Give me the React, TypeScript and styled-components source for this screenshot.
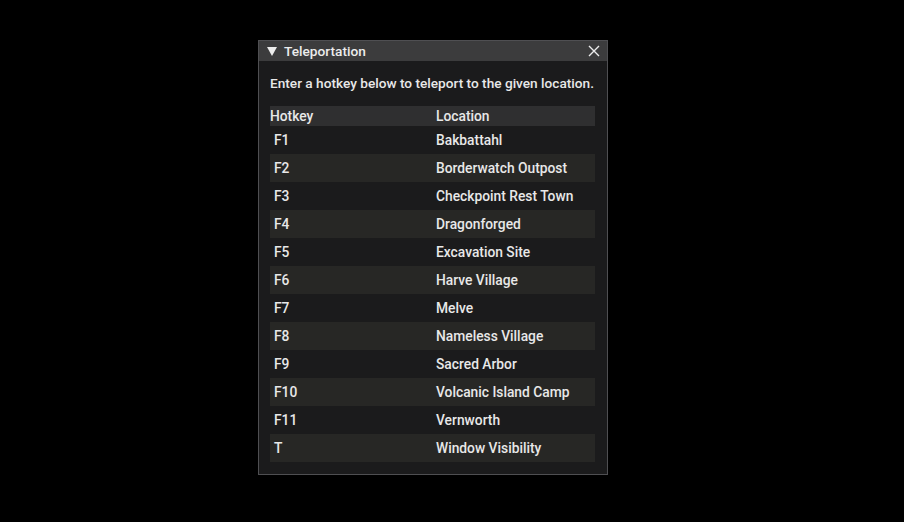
import React from "react";
import styled, { createGlobalStyle } from "styled-components";

const rows: [string, string][] = [
  ["F1", "Bakbattahl"],
  ["F2", "Borderwatch Outpost"],
  ["F3", "Checkpoint Rest Town"],
  ["F4", "Dragonforged"],
  ["F5", "Excavation Site"],
  ["F6", "Harve Village"],
  ["F7", "Melve"],
  ["F8", "Nameless Village"],
  ["F9", "Sacred Arbor"],
  ["F10", "Volcanic Island Camp"],
  ["F11", "Vernworth"],
  ["T", "Window Visibility"],
];

const GlobalStyle = createGlobalStyle`
  html, body {
    margin: 0;
    background: #000;
  }
  body {
    font-family: Roboto, "Liberation Sans", sans-serif;
    font-weight: 500;
    color: #e8e8e8;
  }
`;

const App = () => {
  return (
    <>
      <GlobalStyle />
      <Page>
        <WindowStyled>
          <TitleBar>
            <Arrow viewBox="0 0 10 9">
              <path d="M0 0 L10 0 L5 9 Z" fill="#ececec" />
            </Arrow>
            <Title>Teleportation</Title>
            <CloseButton viewBox="0 0 12 12">
              <path d="M1 1 L11 11 M11 1 L1 11" stroke="#ececec" strokeWidth="1.4" />
            </CloseButton>
          </TitleBar>
          <Body>
            <Intro>Enter a hotkey below to teleport to the given location.</Intro>
            <Table>
              <HeaderRow>
                <HeaderCell>Hotkey</HeaderCell>
                <HeaderCell>Location</HeaderCell>
              </HeaderRow>
              {rows.map(([key, loc], i) => (
                <Row key={key} $alt={i % 2 === 1}>
                  <Cell>{key}</Cell>
                  <Cell>{loc}</Cell>
                </Row>
              ))}
            </Table>
          </Body>
        </WindowStyled>
      </Page>
    </>
  );
};

export default App;

const Page = styled.div`
  width: 904px;
  height: 522px;
  padding: 40px 0 0 258px;
  box-sizing: border-box;
`;

const WindowStyled = styled.div`
  width: 350px;
  height: 435px;
  box-sizing: border-box;
  border: 1px solid #4f4f52;
  background: #1b1b1c;
  display: flex;
  flex-direction: column;
`;

const TitleBar = styled.div`
  height: 20px;
  background: #3c3c3d;
  display: flex;
  align-items: center;
  padding: 0 7px 0 8px;
`;

const Arrow = styled.svg`
  width: 10px;
  height: 9px;
  margin-right: 7px;
`;

const Title = styled.span`
  font-size: 13.7px;
  flex: 1;
  color: #ececec;
`;

const CloseButton = styled.svg`
  width: 12px;
  height: 12px;
`;

const Body = styled.div`
  padding: 12px 11px 0 11px;
`;

const Intro = styled.div`
  font-size: 13.65px;
  height: 20px;
  line-height: 20px;
  margin-bottom: 13px;
  white-space: nowrap;
`;

const Table = styled.div`
  display: flex;
  flex-direction: column;
  width: 325px;
`;

const HeaderRow = styled.div`
  display: grid;
  grid-template-columns: 166px 1fr;
  height: 20px;
  align-items: center;
  background: #2f2f30;
`;

const HeaderCell = styled.div`
  font-size: 13.8px;
`;

const Row = styled.div<{ $alt: boolean }>`
  display: grid;
  grid-template-columns: 166px 1fr;
  height: 28px;
  align-items: center;
  background: ${(p) => (p.$alt ? "#272725" : "transparent")};
  & > div:first-child {
    padding-left: 4px;
  }
`;

const Cell = styled.div`
  font-size: 13.8px;
`;
